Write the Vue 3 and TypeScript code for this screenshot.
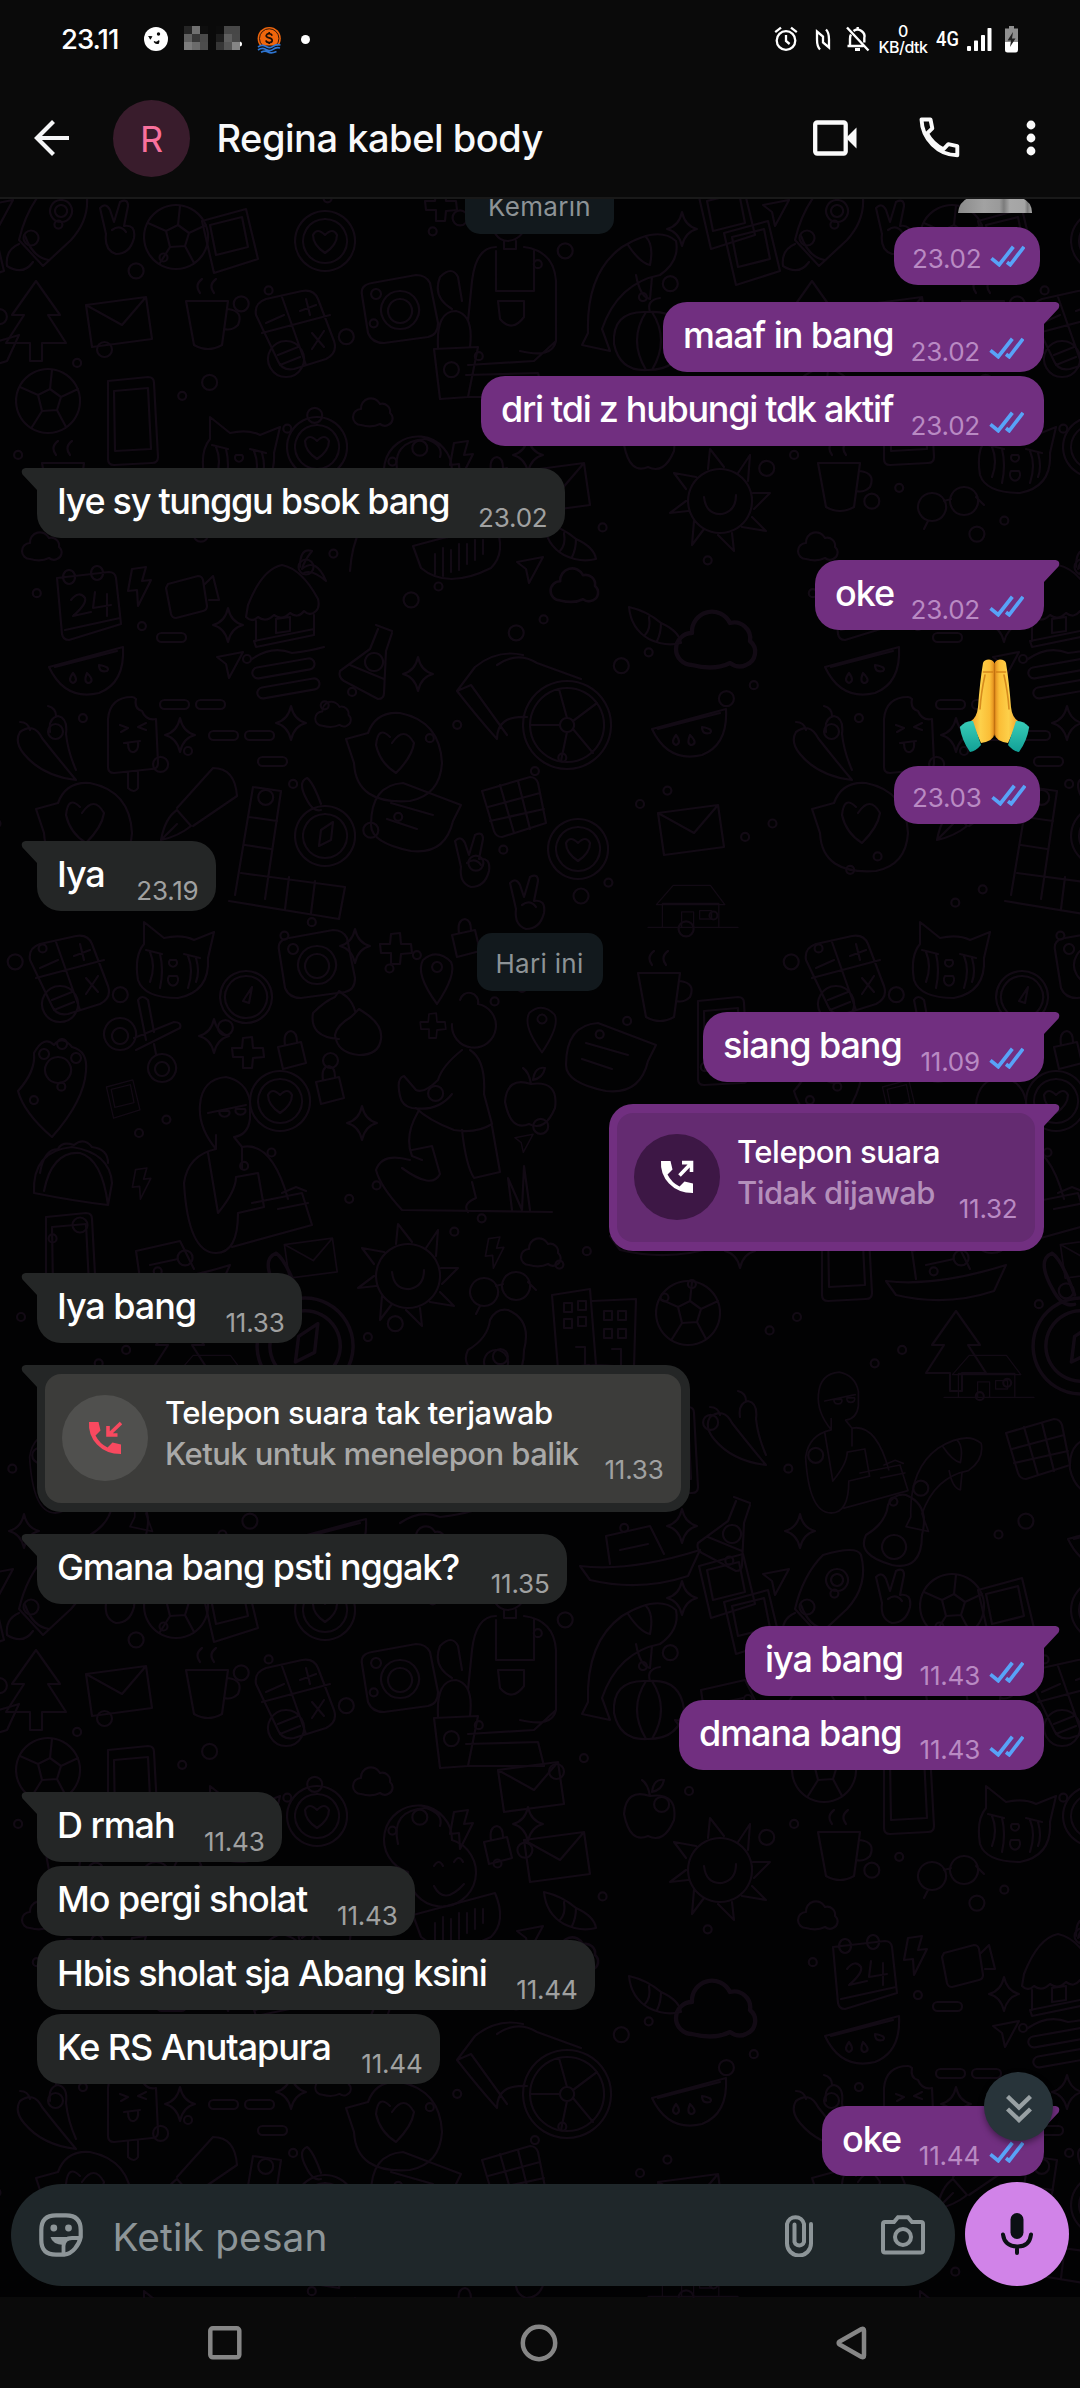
<script setup lang="ts">
type Side = 'in' | 'out'

interface TextItem { kind: 'text'; side: Side; text: string; time: string; width: number; gap: number; tail?: boolean; track?: number }
interface CallItem { kind: 'call'; side: Side; title: string; note: string; time: string; width: number; gap: number }
interface DayItem { kind: 'day'; text: string; width: number; gap: number }
interface StampItem { kind: 'stamp'; time: string; gap: number }
interface EmojiItem { kind: 'emoji'; gap: number }
interface StickerItem { kind: 'sticker'; gap: number }
type Item = TextItem | CallItem | DayItem | StampItem | EmojiItem | StickerItem

const NEW = 21.5
const NEXT = 3.5

const items: Item[] = [
  { kind: 'day', text: 'Kemarin', width: 149, gap: -22.5 },
  { kind: 'sticker', gap: -36 },
  { kind: 'stamp', time: '23.02', gap: 14 },
  { kind: 'text', side: 'out', text: 'maaf in bang', time: '23.02', width: 381, gap: 16.5, tail: true },
  { kind: 'text', side: 'out', text: 'dri tdi z hubungi tdk aktif', time: '23.02', width: 563, gap: NEXT, track: -1.3 },
  { kind: 'text', side: 'in', text: 'Iye sy tunggu bsok bang', time: '23.02', width: 528, gap: NEW, tail: true, track: -1.3 },
  { kind: 'text', side: 'out', text: 'oke', time: '23.02', width: 229, gap: NEW, tail: true },
  { kind: 'emoji', gap: 28.5 },
  { kind: 'stamp', time: '23.03', gap: 13 },
  { kind: 'text', side: 'in', text: 'Iya', time: '23.19', width: 179, gap: 16.5, tail: true },
  { kind: 'day', text: 'Hari ini', width: 126, gap: NEW },
  { kind: 'text', side: 'out', text: 'siang bang', time: '11.09', width: 341, gap: 21, tail: true },
  { kind: 'call', side: 'out', title: 'Telepon suara', note: 'Tidak dijawab', time: '11.32', width: 435, gap: NEW },
  { kind: 'text', side: 'in', text: 'Iya bang', time: '11.33', width: 265, gap: NEW, tail: true },
  { kind: 'call', side: 'in', title: 'Telepon suara tak terjawab', note: 'Ketuk untuk menelepon balik', time: '11.33', width: 653, gap: NEW },
  { kind: 'text', side: 'in', text: 'Gmana bang psti nggak?', time: '11.35', width: 530, gap: NEW, tail: true },
  { kind: 'text', side: 'out', text: 'iya bang', time: '11.43', width: 299, gap: NEW, tail: true },
  { kind: 'text', side: 'out', text: 'dmana bang', time: '11.43', width: 365, gap: NEXT },
  { kind: 'text', side: 'in', text: 'D rmah', time: '11.43', width: 245, gap: NEW, tail: true },
  { kind: 'text', side: 'in', text: 'Mo pergi sholat', time: '11.43', width: 378, gap: NEXT },
  { kind: 'text', side: 'in', text: 'Hbis sholat sja Abang ksini', time: '11.44', width: 558, gap: NEXT, track: -1.17 },
  { kind: 'text', side: 'in', text: 'Ke RS Anutapura', time: '11.44', width: 403, gap: NEXT },
  { kind: 'text', side: 'out', text: 'oke', time: '11.44', width: 222, gap: NEW, tail: true },
]

/* Wallpaper doodles: each shape is a path drawn around its own origin. */
const shapes: Record<string, string> = {
  star: 'M0-17Q3-3 15 0Q3 3 0 17Q-3 3-15 0Q-3-3 0-17Z',
  bolt: 'M-8-18L6-20L2-6L11-7L-2 19L-3 3L-12 4Z',
  cloud: 'M-14 12a8 8 0 0 1 0-16a10 10 0 0 1 19-5a8 8 0 0 1 10 9a7 7 0 0 1-2 12q-4 2-8-1q-8 4-19 1Z',
  plane: 'M-13-9L13-14L-1 12L-4-2Z',
  calendar: 'M-30-28L22-34Q28-34 29-28L34 18L-18 34Q-24 34-25 28ZM-22 24L33 12M-18-36a6 7 0 1 0 .1 0M10-40a6 7 0 1 0 .1 0M-16-6q8-10 14-2q2 6-12 18l18-4M8-14l-2 16l18-3M20-12v22',
  video: 'M-22-14L8-22Q12-22 13-18L17 8Q17 12 13 13L-14 20Q-18 20-19 16L-24-10ZM15-14l8-8l6 24l-10 0',
  hut: 'M-36 10L-34-2Q-20-38 0-42Q20-38 36-8Q38 0 34 4Q28 10 22 4Q16 12 8 6Q0 14-8 8Q-16 16-24 10Q-30 16-36 10ZM-26 14v20M32 8v14M-28 34L32 22V28L-26 40ZM-30 52Q-10 38 10 46Q28 44 42 40M-6 12l14-2v14l-14 2ZM18-40Q18-60 30-56Q22-46 20-38Q34-50 44-26Q30-38 22-34',
  melon: 'M-38-2L36-22Q38 14 12 24Q-22 32-38-2ZM-32-2L30-18M-14 4q-6 8 0 10q6-2 0-10M0 4q-4 10 2 10q6-2-2-10M12-4q0 8 8 6q4-4-8-6',
  pop: 'M-24 28V-20Q-22-42 0-42Q2-42 4-40Q2-30 10-28Q14-18 24-20L26 24Q26 30 20 30L-18 34Q-24 34-24 28ZM-4 33v16q6 6 10 0v-17M-12-14l8 3l-7 4M14-16l-8 4l8 3M-8 4l16-2M-4 4q0 10 6 9q5-2 4-10',
  chili: 'M-30-14Q-16-24-8-8Q6 10 26 34Q-8 30-26 8Q-36-4-30-14ZM-20-16Q-22-24-30-24M0-14Q-2-28 8-30Q18-28 16-12Q18 6 26 24M6-30Q6-38-2-40',
  flask: 'M4-34L20-28M6-30L-2-10L-32 12Q-34 18-28 22L6 40Q12 40 12 34L14-8L20-26M-22 6L12 20M2-6a9 9 0 1 0 .1 0',
  chat: 'M-44-32L-22-38Q-14-60 10-58Q50-50 52-8Q50 24 20 30Q-34 34-36-8ZM0-34Q-12-46-14-26Q-10-8 6 2Q22-14 24-28Q14-46 2-28',
  note: 'M-44 14Q-44-26-12-28L46-6L38 10Q30 44-4 40Q-44 32-44 14ZM-24-8L18 4M-28 8L2 18',
  wheel: 'M0-44a44 44 0 1 0 .1 0M0-37a37 37 0 1 0 .1 0M0-7a7 7 0 1 0 .1 0M0-7L-8-36M6-4L30-22M6 4L26 28M0 7L-6 36M-7 0H-36M-40-8Q-70-10-70 14Q-88-6-110-34M-44-70Q-70-76-92-58L-110-34L-96-40L-60 10M-70-60Q-50-74-30-62L14-46',
  cat: 'M-36 14Q-40-10-30-22L-30-44L-10-28Q8-32 20-26L40-34L34-8Q36 26 4 32Q-30 32-36 14ZM-28-16L-12-12M10-12L26-8M-24-14Q-18 0-24 16M-14-12Q-10 4-14 22M14-10Q20 4 14 22M22-8Q26 6 22 16M-4-6a4 4 0 1 0 6 0ZM-5 10a5 6 0 1 0 8 0Z',
  camera: 'M-38-16Q-40-26-28-28L16-36Q26-36 30-28L38 12Q38 24 28 26L-16 32Q-28 32-32 22ZM0-20a19 19 0 1 0 .1 0M0-12a12 12 0 1 0 .1 0M-24-22a5 5 0 1 0 .1 0',
  calc: 'M-40-18Q-42-30-30-34L6-42Q18-44 22-34L38 8Q42 20 30 26L-2 36Q-14 38-18 28ZM-14-36L10 32M-34 0L34-18M-30-10L-12-18M4-22L20-28M10-34L14-18M16 0L28 14M28-2L16 16M-10 8a18 18 0 1 0 .1 0M-18 22L2 14M-16 32L4 24',
  gauge: 'M0-26a26 26 0 1 0 .1 0M0-21a21 21 0 1 0 .1 0M-3 4L6-10L3 6Z',
  paw: 'M-36 0Q-18-20-20-38Q-10-56 0-46Q8-56 18-44Q34-40 32-20Q30 10-2 46Q-30 22-36 0ZM4-34a13 13 0 1 0 .1 0M-10-42a5 5 0 1 0 .1 0M8-52a5 5 0 1 0 .1 0M22-38a5 5 0 1 0 .1 0',
  scissors: 'M-30-18a16 16 0 1 0 .1 0M-30-8a8 8 0 1 0 .1 0M12 18a14 14 0 1 0 .1 0M12 26a7 7 0 1 0 .1 0M-16 2L24-14Q32-14 30-8L-14 14M4-4L-2-36Q-8-42-12-36L-4 4M4 8l2 10',
  coin: 'M0-30a30 30 0 1 0 .1 0M0-22a22 22 0 1 0 .1 0M0-6Q-8-14-12-6Q-12 4 0 12Q12 4 12-6Q8-14 0-6Z',
  buns: 'M-6 6Q-36 4-32-20Q-20-32-10-36L-6-42L2-36Q8-30 10-22M14-24L20-20Q38-8 36 6Q34 22 14 22Q-8 20-10 2Q-8-8 6-16Z',
  taco: 'M-40 14Q-42-28-2-32Q36-26 38 4L34 26Q0 22-40 14ZM-30 12Q-22-28 6-26Q28-20 34 26M-34-6Q-30-30-16-30Q-12-38 0-34Q10-42 18-32Q34-30 34-16',
  reader: 'M-22-58Q-20-84 4-86Q24-82 28-62V-44Q26-28 12-26L20-16Q50-22 66 36M-22-58Q-24-36-6-14V-28M-14-50L24-58M-2-52a5 4 0 1 0 9 0ZM14-54a5 4 0 1 0 9 0ZM-6-14Q-34-8-38 20Q-34 90-6 90Q16 90 16 50L42 44L36 10L14 14Q14 28-4 50L-14-10M20-16V6M10 84L90 62L80 30L30 40M60 30L74 24L84 28M56 46L86 40',
  hiker: 'M-10-92a22 22 0 1 0 26-20a9 9 0 1 0-18-4M0-66Q-20-50-24-36Q-38-22-46-26L-58-40Q-66-38-62-20Q-60-10-50-8Q-24-4-10-22M8-66Q24-56 22-22L30 8Q14 18-8 14Q-34 4-46-8M-44-4Q-58 20-50 40L-40 44M0 14Q4 50 12 62L38 56L30 10M-52 44Q-80 36-86 54Q-82 70-60 94L90 96M-50 34L-30 30L-22 58Q-30 74-60 52M10 66L14 82Q0 88 6 96M50 94L46 62L60 94L62 50L68 94',
  apple: 'M0-14Q-24-22-26 4Q-20 34-2 26Q14 34 24 10Q28-18 0-14ZM0-14Q-2-26-8-30M2-18Q4-32 14-30Q12-20 2-18',
  sun: 'M0-32a32 32 0 1 0 .1 0M-16-4Q-14 14 2 13Q16 10 16-6M-12-32L-10-52L4-34M18-28L30-46L28-20M33-8L50-8L34 8M32 16L46 30L22 26M12 32L14 50L-2 34M-16 28L-28 44L-26 20M-32 10L-50 12L-34 0M-34-12L-46-28L-24-24',
  glasses: 'M-14-8a14 14 0 1 0 .1 0M18-14a14 14 0 1 0 .1 0M-2 0L5-2M30-4L38 4M-18 20L-22 28',
  egg: 'M10-36Q34-26 26 4Q26 40-4 34Q-40 24-30 4Q-10-8-8-26Q-2-38 10-36ZM-2 4a12 12 0 1 0 .1 0',
  block: 'M-42-26L-4-32L2 44L-36 48ZM-2-20L42-22L40 46L2 44M-30-18h8v9h-8ZM-16-20h8v9h-8ZM-30-2h8v9h-8ZM-16-4h8v9h-8ZM10-10h8v9h-8ZM24-10h8v9h-8ZM10 8h8v9h-8ZM24 8h8v9h-8ZM-18 26h9v18M18 28h9v16',
  ball: 'M0-32a32 32 0 1 0 .1 0M-10-6L2-12L13-4L9 9L-6 10ZM-10-6L-28-14M2-12L4-31M13-4L30-12M9 9L18 26M-6 10L-16 26',
  rocket: 'M-6-40Q28-50 32-40Q40-10 18 14L-10 40L-34 14Q-26-20-6-40ZM8-26a11 11 0 1 0 .1 0M8-21a6 6 0 1 0 .1 0M-28 10Q-20 32-4 34M-34 18Q-48 24-46 40Q-30 50-20 36',
  peace: 'M-14 8L-20-18Q-14-24-10-16L-6-4L0-24Q8-28 8-20L4 0Q16-2 14 12Q10 28-4 28Q-16 24-14 8ZM-8 4Q0-2 6 6',
  gardener: 'M-24-66Q-22-90-2-92Q20-88 18-66M-22-68Q-20-40-4-40Q14-42 16-66M-8-40v8h12v-8M-16-34Q-36-34-40 0L-44 40M12-34Q42-30 44 0V60Q40 78 8 70M-16-30V10H22V-30M-14 20H12V36Q0 52-12 38ZM-78 68L-34 66L-44 116L-72 118ZM-74 66Q-76 30-56 30Q-38 34-42 66M-60 28Q-80 16-72-4Q-60-16-54-4L-50 20M-44 84L22 80L44 60M-46 94L26 92L32 116H-44',
  fish: 'M-44 70Q-46 10-10-16Q26-38 44-22Q48-2 28 12Q-14 20-30 66L-22 88L-50 82ZM-4-18Q8 0 18 2Q22-18 14-26M4 12Q8 34 18 36L20 14',
  photo: 'M-26-20L18-32L30 18L-14 32ZM-18-16L14-24L20 6L-12 14Z',
  pumpkin: 'M-6-24Q-38-24-36 8Q-30 36-2 34Q30 34 34 4Q30-26 0-24ZM-4-24Q-22 4-4 34M2-24Q20 4 2 34M0-24Q-4-36 10-38',
  house: 'M-70 44H80M-46 44V4H48V44M-56 6L-28-26H34L58 6ZM-14 44V18H6V44M16 16H36V30H16Z',
  lock: 'M-13-4L10-9L15 12L-8 18ZM-6-6Q-8-19 0-20Q6-19 6-9',
  cross: 'M-5-15L4-16L5-5L15-5L16 4L5 5L4 15L-5 15L-5 4L-15 4L-16-5L-6-5Z',
  phone: 'M-22-40L18-44Q24-44 24-38L28 36Q28 42 22 42L-16 44Q-22 44-22 38ZM-16-30L18-33L21 28L-15 30Z',
  pen: 'M-44 44Q-40 22-28 14L-14 30Q-26 40-44 44ZM-28 12L8-28Q30-28 32 0L-12 30M-44 44L-28 28',
  tiles: 'M-12-72L16-68L0 40M-12-72L-30 36M-16-42L12-38M-20-14L6-10M-24 14L80 28L74 60L-36 42M24 18L20 50M50 22L46 54',
  compass: 'M0-30a30 30 0 1 0 .1 0M0-22a22 22 0 1 0 .1 0M-6 10L-4-6L8-14L6 4ZM-4-32q-8-22-14-26q-10 4 0 22q6 12 14 10',
  gift: 'M-30-18L18-32Q24-32 26-26L34 14L-10 28Q-16 28-18 22ZM-24-2L28-16M-12-24L2 24M6-28L18 20M-22 12L32 0',
  pin: 'M0 26Q-22-4-14-18Q0-30 14-16Q20-4 0 26ZM0-16a5 5 0 1 0 .1 0',
  shell: 'M-26-14Q-8-10 6 2Q24 10 26 22Q10 26-6 18Q-24 8-26-14ZM-6-4Q-4 8-10 14M6 2Q6 12 2 20',
  person: 'M-70 60Q-66 4-30-6M-12-8a34 34 0 1 0 44-32a34 34 0 1 0-44 32M14-14q5-8 9 0M34-18q5-8 9 0M14 6Q24 26 44 4M-22-36Q-30-70 6-72Q24-66 20-54',
  wave: 'M-42-10L40-32Q52-4 36 12Q-8 34-34 12ZM-20-2v20M-12-8v28M-4-6v22M4-12v26M12-12v20M20-16v20M28-16v14',
  mail: 'M-32-18L28-26L34 16L-26 24ZM-32-18L4 2L28-26',
  cup: 'M-22-18H20L14 26Q0 34-14 26ZM20-10Q36-8 30 6Q24 12 16 10M-8-26Q-14-34-6-40M6-26Q0-34 8-40',
  boat: 'M-60 20Q-10 26 60 4L48 30Q0 46-50 34ZM-30 18L-34-10L10-20L24 8M-20 4L8-2',
  tree: 'M0-40L24-6H12L30 22H6V40H-6V22H-30L-12-6H-24Z',
}

const doodles: [string, number, number, number?][] = [
  ['rocket', 53, 225], ['peace', 120, 225], ['ball', 176, 236], ['photo', 228, 240], ['coin', 325, 240], ['cross', 441, 205],
  ['gardener', 512, 280], ['fish', 632, 262], ['photo', 725, 216], ['photo', 750, 252], ['star', 682, 228], ['plane', 776, 213],
  ['pumpkin', 650, 335], ['mail', 118, 322], ['cup', 208, 318], ['tree', 36, 320], ['calc', 296, 332], ['camera', 400, 310], ['boat', 735, 330],
  ['ball', 48, 400], ['cup', 64, 480], ['phone', 130, 420], ['cloud', 375, 412], ['mail', 530, 418], ['coin', 317, 446], ['person', 420, 510],
  ['bolt', 462, 460], ['lock', 497, 476], ['mail', 556, 488], ['shell', 570, 536], ['wave', 455, 555], ['apple', 650, 440], ['sun', 720, 500], ['cat', 240, 460], ['glasses', 170, 500], ['star', 528, 454],
  ['calendar', 87, 605], ['bolt', 140, 586], ['video', 190, 597], ['hut', 282, 606], ['star', 228, 624], ['flask', 372, 658], ['melon', 87, 668], ['plane', 230, 665], ['cloud', 44, 546],
  ['pop', 132, 738], ['chili', 50, 745], ['star', 180, 734], ['star', 291, 722], ['cloud', 335, 714, 0.9], ['chat', 390, 770], ['wheel', 567, 724], ['cloud', 577, 585, 1.2], ['plane', 530, 570],
  ['note', 415, 810], ['gift', 512, 808], ['pen', 205, 795], ['tiles', 265, 858], ['compass', 325, 835], ['chat', 80, 840], ['coin', 578, 848], ['peace', 475, 858], ['peace', 530, 900],
  ['cloud', 720, 640, 2], ['star', 418, 673], ['shell', 655, 620], ['melon', 690, 730], ['mail', 690, 830], ['house', 690, 900, 0.6],
  ['calc', 70, 977], ['cat', 174, 965], ['camera', 317, 965], ['gauge', 246, 996], ['star', 355, 945], ['cross', 396, 948], ['lock', 465, 938], ['pin', 437, 977], ['note', 610, 1050],
  ['scissors', 150, 1035], ['star', 214, 1035], ['cross', 248, 1052], ['lock', 291, 1050], ['buns', 345, 1032], ['cross', 433, 1025, 0.8], ['hiker', 462, 1115], ['apple', 531, 1097], ['pin', 542, 1028, 0.9],
  ['paw', 54, 1090], ['photo', 122, 1098, 0.6], ['reader', 222, 1162], ['coin', 280, 1100], ['lock', 329, 1085], ['star', 362, 1122], ['plane', 524, 1143, 0.7], ['taco', 74, 1178], ['bolt', 142, 1183, 0.8],
  ['cloud', 680, 1150, 1.6], ['cup', 660, 990], ['phone', 720, 1040], ['boat', 670, 1215], ['phone', 68, 1256], ['boat', 170, 1260], ['mail', 310, 1258, 0.8], ['sun', 408, 1275], ['bolt', 495, 1252, 0.8], ['cloud', 543, 1252],
  ['glasses', 498, 1285], ['egg', 498, 1345], ['block', 594, 1320], ['ball', 688, 1312], ['compass', 305, 1345, 1.6], ['tree', 180, 1350], ['house', 210, 1370, 0.6], ['star', 740, 1250],
  ['reader', 60, 1440, 0.8], ['fish', 170, 1460, 0.8], ['gift', 260, 1450], ['pumpkin', 330, 1460], ['hut', 430, 1470], ['camera', 530, 1450], ['boat', 640, 1545], ['phone', 670, 1450], ['chili', 740, 1430], ['star', 24, 1530], ['egg', 120, 1530], ['cloud', 430, 1540], ['cross', 585, 1380], ['star', 682, 1525], ['flask', 730, 1530], ['melon', 330, 1540],
]

const dots: [number, number, number][] = []
for (let i = 0; i < 150; i++) {
  dots.push([(i * 293.7 + 31) % 776, 180 + ((i * 467.3 + 57) % 1369), i % 3 === 0 ? 7.5 : 4])
}

const tiles = [
  [0, 0], [776, 0], [0, 1369], [776, 1369], [-776, 0], [-776, 1369],
]
</script>

<template>
  <div class="screen">
    <header class="top">
      <div class="status">
        <span class="clock">23.11</span>
        <svg class="s-face" width="24" height="24" viewBox="0 0 24 24">
          <circle cx="12" cy="12" r="12" fill="#fff" />
          <circle cx="14.5" cy="7" r="1.7" fill="#0a0a0a" />
          <path d="M4.5 9.5l3 .2-1.4 2.6M10 14.5q2.5 2 5-.8l-.6 2.5q-2.5 1-4.4-1.7" stroke="#0a0a0a" stroke-width="1.2" fill="#0a0a0a" />
        </svg>
        <svg class="s-block" width="24" height="24" viewBox="0 0 24 24" shape-rendering="crispEdges">
          <rect width="24" height="24" fill="#252525" /><rect x="8" width="8" height="8" fill="#707070" />
          <rect y="8" width="8" height="8" fill="#606060" /><rect x="8" y="8" width="8" height="8" fill="#383838" /><rect x="16" y="8" width="8" height="8" fill="#4a4a4a" />
          <rect y="16" width="8" height="8" fill="#7c7c7c" /><rect x="8" y="16" width="8" height="8" fill="#6b6b6b" /><rect x="16" y="16" width="8" height="8" fill="#4c4c4c" />
          <rect x="16" width="8" height="8" fill="#0e0e0e" />
        </svg>
        <svg class="s-block2" width="26" height="24" viewBox="0 0 26 24">
          <circle cx="23.5" cy="18" r="2.5" fill="#fff" />
          <g shape-rendering="crispEdges">
            <rect width="8" height="8" fill="#0c0c0c" /><rect x="8" width="16" height="8" fill="#474747" />
            <rect y="8" width="8" height="8" fill="#1d1d1d" /><rect x="8" y="8" width="8" height="8" fill="#5f5f5f" /><rect x="16" y="8" width="8" height="8" fill="#484848" />
            <rect y="16" width="8" height="8" fill="#363636" /><rect x="8" y="16" width="8" height="8" fill="#555" /><rect x="16" y="16" width="8" height="8" fill="#858585" />
          </g>
        </svg>
        <svg class="s-coin" width="24" height="28" viewBox="0 0 24 28">
          <circle cx="12.2" cy="12.5" r="11.6" fill="#f0660c" /><circle cx="12.2" cy="12.5" r="9.7" fill="none" stroke="#35180a" stroke-width="1" />
          <path d="M15.2 9.6q-.8-2-3-2t-3 1.9q0 1.8 3 2.4t3 2.6q0 2-3 2t-3.2-2.1M12.2 6v1.6M12.2 16.5V18" fill="none" stroke="#1c0d05" stroke-width="1.7" />
          <path d="M0 19.500h24V28H0Z" fill="#0a0a0a" />
          <path d="M1 21q4-3 8-.6t7 0T23.500 19M1 24q4-3 8-.6t7 0T23 22M4 26.300q4-2.200 7-.3t8.500-.5" fill="none" stroke="#2e74cf" stroke-width="1.700" />
        </svg>
        <i class="s-dot"></i>
        <span class="grow"></span>
        <svg class="s-alarm" width="24" height="26" viewBox="0 0 24 26" fill="none" stroke="#fff" stroke-width="2.300">
          <circle cx="12" cy="14.500" r="9.300" /><path d="M12 9v6l3.600 3M1.200 6.200L7 1.600M22.800 6.200L17 1.600" />
        </svg>
        <svg class="s-nfc" width="16" height="23" viewBox="0 0 16 23" fill="none" stroke="#fff" stroke-width="2.300">
          <path d="M5 21.500Q2 18.500 2 11.500V3.500L8 8.500V13.500M11 1.500Q14 4.500 14 11.500V19.500L8 14.500V9.500" />
        </svg>
        <svg class="s-bell" width="25" height="26" viewBox="0 0 25 26" fill="none" stroke="#fff" stroke-width="2.400">
          <path d="M2 1.500L23.500 24.500M6 8.500Q5 10 5 13V20M2.500 20H18.500M8.500 5Q12.500 2 16.500 5T19.300 12v4.500M12.700 1v3" /><path d="M10 23.500h5" stroke-width="3" />
        </svg>
        <span class="net"><b>0</b><b>KB/dtk</b></span>
        <span class="g4">4G</span>
        <svg class="s-sig" width="25" height="23" viewBox="0 0 25 23" fill="#fff">
          <rect x="0" y="18" width="4" height="5" rx="1" /><rect x="7" y="12.500" width="4" height="10.500" rx=".7" /><rect x="14" y="7" width="4" height="16" rx=".7" /><rect x="20.500" y="0" width="4" height="23" rx=".7" />
        </svg>
        <svg class="s-bat" width="13" height="27" viewBox="0 0 13 27">
          <path d="M4 0h5v2.500h4V16H0V2.500h4Z" fill="#8f8f8f" /><path d="M0 16h13v8q0 2.500-2.500 2.500h-8Q0 26.500 0 24Z" fill="#fff" />
          <path d="M8 6L2.500 14.500H6L5 21l5.500-8.500H7Z" fill="#222" />
        </svg>
      </div>
      <div class="bar">
        <svg class="back" width="36" height="36" viewBox="0 0 36 36" fill="none" stroke="#f5f6f7" stroke-width="4.200">
          <path d="M35 18H3M19.500 1.500L3 18L19.500 34.500" />
        </svg>
        <span class="avatar">R</span>
        <h1>Regina kabel body</h1>
        <svg class="i-video" width="44" height="36" viewBox="0 0 44 36">
          <rect x="2.200" y="2.500" width="30.500" height="31" rx="2" fill="none" stroke="#fafafa" stroke-width="4.300" />
          <path d="M34 17L43.500 7.500V28.500L34 19Z" fill="#fafafa" />
        </svg>
        <svg class="i-phone" width="41" height="41" viewBox="0 0 41 41" fill="none" stroke="#fafafa" stroke-width="3.900" stroke-linejoin="round">
          <path d="M2.500 2.500H11.500L13.300 11.300L8 16.500Q13.500 27 24.300 32.300L29.300 27.200L38.300 29.200V38.300Q24 38.300 13.500 27.700T2.500 2.500Z" />
        </svg>
        <svg class="i-dots" width="10" height="36" viewBox="0 0 10 36" fill="#fafafa">
          <circle cx="5" cy="5" r="4.400" /><circle cx="5" cy="18" r="4.400" /><circle cx="5" cy="31" r="4.400" />
        </svg>
      </div>
    </header>

    <main class="chat">
      <svg class="wall" width="1080" height="2099" viewBox="0 198 1080 2099" aria-hidden="true">
        <defs>
          <g id="doodle-tile" fill="none" stroke="#120a14" stroke-width="2.200" stroke-linejoin="round" stroke-linecap="round">
            <path
              v-for="(d, i) in doodles"
              :key="i"
              :d="shapes[d[0]]"
              :transform="`translate(${d[1]} ${d[2]}) scale(${d[3] ?? 1})`"
            />
            <circle v-for="(c, i) in dots" :key="'c' + i" :cx="c[0]" :cy="c[1]" :r="c[2]" />
            <rect x="157" y="632" width="29" height="9" rx="4.500" />
            <rect x="160" y="699" width="29" height="9" rx="4.500" />
            <rect x="196" y="699" width="29" height="9" rx="4.500" />
            <rect x="209" y="730" width="29" height="9" rx="4.500" />
            <rect x="245" y="730" width="29" height="9" rx="4.500" />
            <rect x="258" y="756" width="29" height="9" rx="4.500" />
            <rect x="252" y="662" width="63" height="11" rx="5.500" transform="rotate(-10 283 668)" />
            <rect x="257" y="682" width="63" height="11" rx="5.500" transform="rotate(-10 288 688)" />
          </g>
        </defs>
        <use v-for="(t, i) in tiles" :key="i" href="#doodle-tile" :x="t[0]" :y="t[1]" />
      </svg>

      <div class="list">
        <template v-for="(m, i) in items" :key="i">
          <div v-if="m.kind === 'day'" class="day" :style="{ width: m.width + 'px', marginTop: m.gap + 'px' }">{{ m.text }}</div>

          <svg v-else-if="m.kind === 'sticker'" class="sticker" :style="{ marginTop: m.gap + 'px' }" width="74" height="15" viewBox="0 0 74 15">
            <defs>
              <linearGradient id="grey" x1="0" x2="1" y1="0" y2="0">
                <stop offset="0" stop-color="#8a8a8a" /><stop offset=".35" stop-color="#a2a2a2" /><stop offset=".56" stop-color="#9a9a9a" />
                <stop offset=".62" stop-color="#7c7c7c" /><stop offset=".7" stop-color="#a8a8a8" /><stop offset=".9" stop-color="#a4a4a4" /><stop offset=".94" stop-color="#7c7c7c" /><stop offset="1" stop-color="#aaa" />
              </linearGradient>
            </defs>
            <path d="M0 15Q1 4 10 0H64Q74 4 74 15Z" fill="url(#grey)" />
          </svg>

          <svg v-else-if="m.kind === 'emoji'" class="emoji" :style="{ marginTop: m.gap + 'px' }" width="72" height="94" viewBox="0 0 72 94">
            <defs>
              <linearGradient id="handL" x1="0" x2="1" y1="0" y2="0"><stop offset="0" stop-color="#f2a32c" /><stop offset=".4" stop-color="#fdd04a" /><stop offset=".8" stop-color="#fbbd36" /><stop offset="1" stop-color="#e08a1c" /></linearGradient>
              <linearGradient id="handR" x1="1" x2="0" y1="0" y2="0"><stop offset="0" stop-color="#f2a32c" /><stop offset=".4" stop-color="#fdd04a" /><stop offset=".8" stop-color="#fbbd36" /><stop offset="1" stop-color="#e08a1c" /></linearGradient>
              <linearGradient id="cuff" x1="0" x2="0" y1="0" y2="1"><stop offset="0" stop-color="#38cdb8" /><stop offset="1" stop-color="#12a096" /></linearGradient>
            </defs>
            <path d="M24 4Q25 .5 30 .5Q35 1 35.500 5V74Q35 82 22 84L12 62Q18 58 19 48Q21 22 24 4Z" fill="url(#handL)" />
            <path d="M47 4Q46 .5 41 .5Q36 1 35.500 5V74Q36 82 49 84L59 62Q53 58 52 48Q50 22 47 4Z" fill="url(#handR)" />
            <path d="M35.500 5V76M24.500 13h9M37.500 13h9M26 16Q22 34 21 50M45 16Q49 34 50 50" fill="none" stroke="#c9740f" stroke-width="1.600" stroke-linecap="round" opacity=".75" />
            <path d="M.8 68Q7 61 14 62L22 86Q17 92 11 93Q3 82 .8 68Z" fill="url(#cuff)" />
            <path d="M70.200 68Q64 61 57 62L49 86Q54 92 60 93Q68 82 70.200 68Z" fill="url(#cuff)" />
          </svg>

          <div v-else-if="m.kind === 'stamp'" class="bubble out stamp" :style="{ marginTop: m.gap + 'px' }">
            <span class="time">{{ m.time }}</span>
            <svg class="ticks" width="35" height="22" viewBox="0 0 36 22"><path d="M1.500 13.500L9.500 20L24 1.500M17.500 17.500L20.800 20L35 1.500" /></svg>
          </div>

          <div v-else-if="m.kind === 'text'" class="bubble" :class="[m.side, { tail: m.tail }]" :style="{ width: m.width + 'px', marginTop: m.gap + 'px' }">
            <svg v-if="m.tail" class="nib" width="17" height="24" viewBox="0 0 17 24"><path d="M0 0H12.500Q18 1 15.500 6.500L1 22V24H0Z" /></svg>
            <span class="body" :style="{ letterSpacing: (m.track ?? -1.08) + 'px' }">{{ m.text }}</span>
            <span class="time">{{ m.time }}</span>
            <svg v-if="m.side === 'out'" class="ticks" width="35" height="22" viewBox="0 0 36 22"><path d="M1.500 13.500L9.500 20L24 1.500M17.500 17.500L20.800 20L35 1.500" /></svg>
          </div>

          <div v-else class="bubble call tail" :class="m.side" :style="{ width: m.width + 'px', marginTop: m.gap + 'px' }">
            <svg class="nib" width="17" height="24" viewBox="0 0 17 24"><path d="M0 0H12.500Q18 1 15.500 6.500L1 22V24H0Z" /></svg>
            <div class="card">
              <span class="ring">
                <svg width="34" height="34" viewBox="0 0 34 34">
                  <path class="handset" d="M1 1H10.500L12.500 9.500L7.500 14.500Q11.500 22.500 19.500 26.500L24.500 21.500L33 23.500V33Q18 33 9 23.500T1 1Z" />
                  <path v-if="m.side === 'out'" class="dir" d="M19.500 15.500L31 3.500M22 2.600H31.500V12" />
                  <path v-else class="dir" d="M33 2L21 13.500M20 5V14H29.500" />
                </svg>
              </span>
              <div class="lines"><strong>{{ m.title }}</strong><em>{{ m.note }}</em></div>
              <span class="time">{{ m.time }}</span>
            </div>
          </div>
        </template>
        <button class="fab" aria-label="Gulir ke bawah">
          <svg width="26" height="28" viewBox="0 0 26 28" fill="none" stroke="#98a0a3" stroke-width="4.400"><path d="M1.500 1.500L13 12.500L24.500 1.500M1.500 14L13 25L24.500 14" /></svg>
        </button>
      </div>

      <footer class="composer">
        <div class="field">
          <svg class="f-smile" width="44" height="44" viewBox="0 0 44 44" fill="none" stroke="#8d9598" stroke-width="4.200">
            <path d="M17 2.300H27Q41.700 2.300 41.700 17V24Q40.500 30 36 35.500T25 41.700H17Q2.300 41.700 2.300 27V17Q2.300 2.300 17 2.300Z" stroke-linejoin="round" />
            <path d="M24.500 41V33Q25 25 33 25H41" stroke-width="3.800" />
            <circle cx="14.800" cy="15" r="3.400" fill="#8d9598" stroke="none" /><circle cx="29.500" cy="15" r="3.400" fill="#8d9598" stroke="none" />
            <path d="M11.500 24H33Q27 25 24.500 32Q13.500 31.500 11.500 24Z" fill="#8d9598" stroke="none" />
          </svg>
          <span class="hint">Ketik pesan</span>
          <svg class="f-clip" width="28" height="44" viewBox="0 0 28 44" fill="none" stroke="#8d9598" stroke-width="4" stroke-linecap="round">
            <path d="M26 11V30.500A12 12 0 0 1 2 30.500V11A8.700 8.700 0 0 1 19 11V29A5 5 0 0 1 9.500 29V11.500" />
          </svg>
          <svg class="f-cam" width="44" height="40" viewBox="0 0 44 40" fill="none" stroke="#8d9598" stroke-width="4">
            <path d="M4 7H13L17 2.200H27L31 7H40Q42 7 42 9V35.500Q42 37.500 40 37.500H4Q2 37.500 2 35.500V9Q2 7 4 7Z" /><circle cx="22" cy="22" r="8" />
          </svg>
        </div>
        <button class="mic" aria-label="Rekam">
          <svg width="32" height="42" viewBox="0 0 32 42"><rect x="9.500" y="0" width="13" height="26" rx="6.500" fill="#0b1014" /><path d="M2 21.500Q3.500 33 16 33.500T30 21.500M16 33.500V40" fill="none" stroke="#0b1014" stroke-width="4" stroke-linecap="round" /></svg>
        </button>
      </footer>
    </main>

    <nav class="keys">
      <svg width="34" height="34" viewBox="0 0 34 34"><rect x="2.300" y="2.300" width="29" height="29" rx="2.500" /></svg>
      <svg width="38" height="38" viewBox="0 0 38 38"><circle cx="19" cy="19" r="16.200" /></svg>
      <svg width="31" height="34" viewBox="0 0 31 34"><path d="M25.500 3Q28 2 28 4.500V29.500Q28 32 25.500 31L3.500 18.500Q1.800 17 3.500 15.500Z" /></svg>
    </nav>
  </div>
</template>

<style>
body { margin: 0; background: #020203; }
</style>

<style scoped>
.screen { width: 1080px; height: 2388px; display: flex; flex-direction: column; overflow: hidden; background: #0a0a0a; font-family: Inter, Roboto, sans-serif; color: #fff; }
svg { display: block; flex: none; }
button { border: 0; padding: 0; display: flex; align-items: center; justify-content: center; }

.top { height: 199px; box-sizing: border-box; border-bottom: 2px solid #191919; background: #0a0a0a; position: relative; z-index: 2; flex: none; }
.status { height: 78px; display: flex; align-items: center; padding: 0 62px 0 61px; box-sizing: border-box; }
.clock { font-size: 27.500px; font-weight: 500; letter-spacing: -1px; width: 83px; }
.s-block { margin-left: 15.500px; margin-top: -2px; }
.s-block2 { margin-left: 8px; margin-top: -2px; }
.s-coin { margin-left: 15px; margin-top: 2px; }
.s-dot { width: 9px; height: 9px; border-radius: 50%; background: #fff; margin-left: 20px; }
.grow { flex: 1; }
.s-nfc { margin-left: 17px; }
.s-bell { margin-left: 14px; }
.net { display: flex; flex-direction: column; align-items: center; width: 50px; margin-left: 8px; margin-top: -1px; }
.net b { font-size: 16px; font-weight: 500; line-height: 16px; letter-spacing: -.5px; }
.g4 { font-family: Roboto, sans-serif; font-size: 21px; font-weight: 500; width: 23px; margin-left: 8px; transform: scaleX(.87); transform-origin: left; margin-top: -1px; }
.s-sig { margin-left: 8px; }
.s-bat { margin-left: 13px; }

.bar { height: 121px; display: flex; align-items: center; padding: 0 44px 0 34px; box-sizing: border-box; }
.back { margin-top: -2px; }
.avatar { width: 77px; height: 77px; border-radius: 50%; background: #391c2c; color: #f8719d; font-size: 36px; display: flex; align-items: center; justify-content: center; margin-left: 43px; }
h1 { margin: -2px 0 0 26.500px; font-size: 38px; font-weight: 500; letter-spacing: -.48px; flex: 1; white-space: nowrap; color: #f8f9fa; }
.i-video { margin: -2px 62px 0 0; }
.i-phone { margin: -2px 66px 0 0; }
.i-dots { margin-top: -2px; }

.chat { height: 2098px; position: relative; display: flex; flex-direction: column; background: #020203; flex: none; }
.wall { position: absolute; left: 0; top: 0; }
.list { height: 1984px; flex: none; position: relative; display: flex; flex-direction: column; margin-top: -1px; }

.day { align-self: center; height: 58px; border-radius: 15px; background: #12191d; color: #8d9396; font-size: 26px; line-height: 61px; text-align: center; letter-spacing: .3px; flex: none; margin-right: 1px; }
.sticker { align-self: flex-end; margin-right: 48px; }
.emoji { align-self: flex-end; margin-right: 49px; }

.bubble { box-sizing: border-box; height: 70.500px; border-radius: 24px; display: flex; position: relative; flex: none; }
.bubble.out { align-self: flex-end; margin-right: 36px; background: #712f80; padding: 0 20px 0 20px; }
.bubble.in { align-self: flex-start; margin-left: 37px; background: #242626; padding: 0 17.500px 0 20px; }
.bubble.out.tail { border-top-right-radius: 0; }
.bubble.in.tail { border-top-left-radius: 0; }
.nib { position: absolute; top: 0; fill: #712f80; right: -16px; }
.in .nib { right: auto; left: -16px; transform: scaleX(-1); fill: #242626; }
.body { flex: 1; font-size: 36px; font-weight: 500; line-height: 66px; white-space: nowrap; }
.time { align-self: flex-end; font-size: 26px; line-height: 30px; margin-bottom: 5.500px; color: #b98ac3; letter-spacing: -.2px; white-space: nowrap; }
.in .time { color: #a0a1a1; }
.ticks { align-self: flex-end; margin: 0 0 13px 9px; fill: none; stroke: #58a3f8; stroke-width: 3.800; }

.bubble.stamp { width: 146px; height: 58.500px; margin-right: 40px; padding: 0 17px 0 18px; }
.stamp .time { margin-bottom: 11.500px; }
.stamp .ticks { margin-bottom: 18px; }

.bubble.call { height: 147.500px; padding: 9px 9px 9px 8px; }
.card { flex: 1; display: flex; align-items: center; border-radius: 16px; background: #642b71; padding: 0 17.500px 0 17px; }
.in .card { background: #3c3c3a; }
.ring { width: 86px; height: 86px; border-radius: 50%; background: #3d1745; display: flex; align-items: center; justify-content: center; }
.in .ring { background: #50504e; }
.handset { fill: #fff; }
.dir { fill: none; stroke: #fff; stroke-width: 3.600; }
.in .handset { fill: #f8495f; }
.in .dir { stroke: #f8495f; }
.lines { flex: 1; display: flex; flex-direction: column; margin-left: 17px; margin-top: -10px; white-space: nowrap; }
.lines strong, .lines em { font-style: normal; font-weight: 500; font-size: 31px; line-height: 41px; letter-spacing: -.48px; }
.lines em { color: #b48fbb; letter-spacing: -.56px; }
.in .lines em { color: #a9a9a8; }
.card .time { margin-bottom: 18px; }

.fab { position: absolute; right: 27px; bottom: 41px; width: 69px; height: 69px; border-radius: 50%; background: #28343a; box-shadow: 0 3px 6px rgba(0, 0, 0, .4); }
.fab svg { margin-top: 5px; }

.composer { display: flex; padding: 0 11px; position: relative; align-items: flex-end; justify-content: space-between; height: 104px; flex: none; }
.field { width: 944px; height: 102px; border-radius: 51px; background: #1f272a; display: flex; align-items: center; padding: 0 30px 0 28px; box-sizing: border-box; }
.hint { flex: 1; margin-left: 29.500px; font-size: 38.800px; color: #8d9598; letter-spacing: .2px; padding-top: 3px; }
.f-clip { margin-right: 68px; }
.mic { width: 104px; height: 104px; border-radius: 50%; background: #d183e8; }

.keys { flex: 1; display: flex; align-items: center; padding: 0 213px 0 208px; justify-content: space-between; background: #0a0a0a; }
.keys svg { fill: none; stroke: #868686; stroke-width: 4.500; }
</style>
